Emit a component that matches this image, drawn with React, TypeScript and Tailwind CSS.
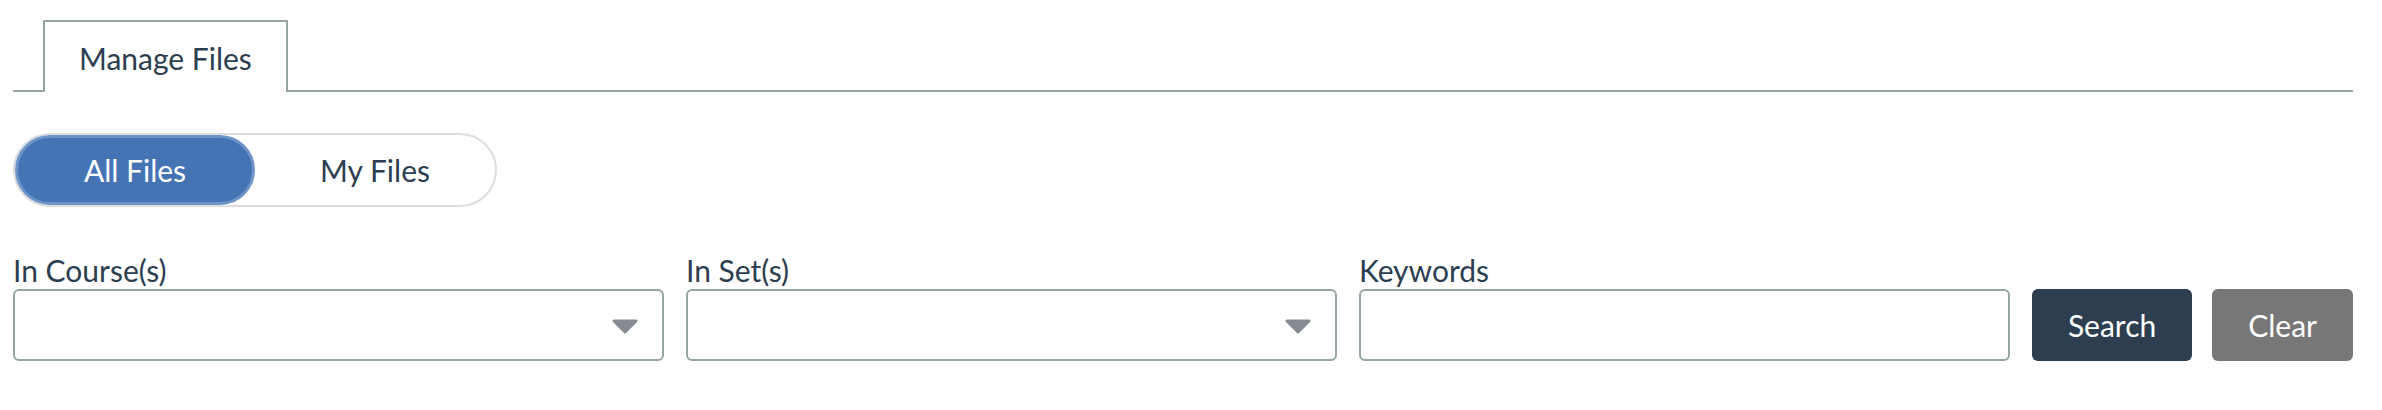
import React, { useState } from 'react';

function CaretDown() {
  return (
    <svg width="28" height="15" viewBox="0 0 28 15" className="shrink-0">
      <path d="M3 2 L25 2 L14 13 Z" fill="#868b92" stroke="#868b92" strokeWidth="3" strokeLinejoin="round" />
    </svg>
  );
}

function SelectField({ label }: { label: string }) {
  return (
    <div className="flex min-w-0 flex-1 flex-col">
      <label className="mb-[1px] text-[30px] leading-[1.2]">{label}</label>
      <div className="flex h-[72px] items-center justify-end rounded-[6px] border-2 border-[#95a5a6] bg-white pr-[23px] pt-[2px]">
        <CaretDown />
      </div>
    </div>
  );
}

export default function App() {
  const [scope, setScope] = useState<'all' | 'mine'>('all');
  const [keywords, setKeywords] = useState('');

  return (
    <div className="min-h-[410px] bg-white pl-[13px] pr-[29px] pt-[20px] font-['Lato','Open_Sans',sans-serif] text-[#2c3e50]">
      {/* tabs */}
      <div className="flex border-b-2 border-[#95a5a6] pl-[30px]">
        <div className="-mb-[2px] flex h-[72px] items-center border-2 border-b-0 border-[#95a5a6] bg-white px-[34px] pt-[3px] text-[30px]">
          Manage Files
        </div>
      </div>

      {/* all / my files toggle */}
      <div className="mt-[41px] inline-flex rounded-full border-2 border-[#dddddd]">
        <button
          onClick={() => setScope('all')}
          className={
            scope === 'all'
              ? 'h-[70px] w-[240px] rounded-full border-[3px] border-[#6f95c8] bg-[#4474b4] text-[30px] text-white'
              : 'h-[70px] w-[240px] rounded-full text-[30px] text-[#2c3e50]'
          }
        >
          All Files
        </button>
        <button
          onClick={() => setScope('mine')}
          className={
            scope === 'mine'
              ? 'h-[70px] w-[240px] rounded-full border-[3px] border-[#6f95c8] bg-[#4474b4] text-[30px] text-white'
              : 'h-[70px] w-[240px] rounded-full text-[30px] text-[#2c3e50]'
          }
        >
          My Files
        </button>
      </div>

      {/* filters */}
      <div className="mt-[45px] flex items-end">
        <div className="flex flex-1 gap-[22px]">
          <SelectField label="In Course(s)" />
          <SelectField label="In Set(s)" />
          <div className="flex min-w-0 flex-1 flex-col">
            <label className="mb-[1px] text-[30px] leading-[1.2]">Keywords</label>
            <input
              value={keywords}
              onChange={(e) => setKeywords(e.target.value)}
              className="h-[72px] rounded-[6px] border-2 border-[#95a5a6] bg-white px-3 text-[28px] outline-none"
            />
          </div>
        </div>
        <button className="ml-[22px] h-[72px] rounded-[6px] bg-[#2c3e50] px-[36px] text-[30px] text-white">
          Search
        </button>
        <button
          onClick={() => setKeywords('')}
          className="ml-[20px] h-[72px] rounded-[6px] bg-[#777777] px-[36px] text-[30px] text-white"
        >
          Clear
        </button>
      </div>
    </div>
  );
}
